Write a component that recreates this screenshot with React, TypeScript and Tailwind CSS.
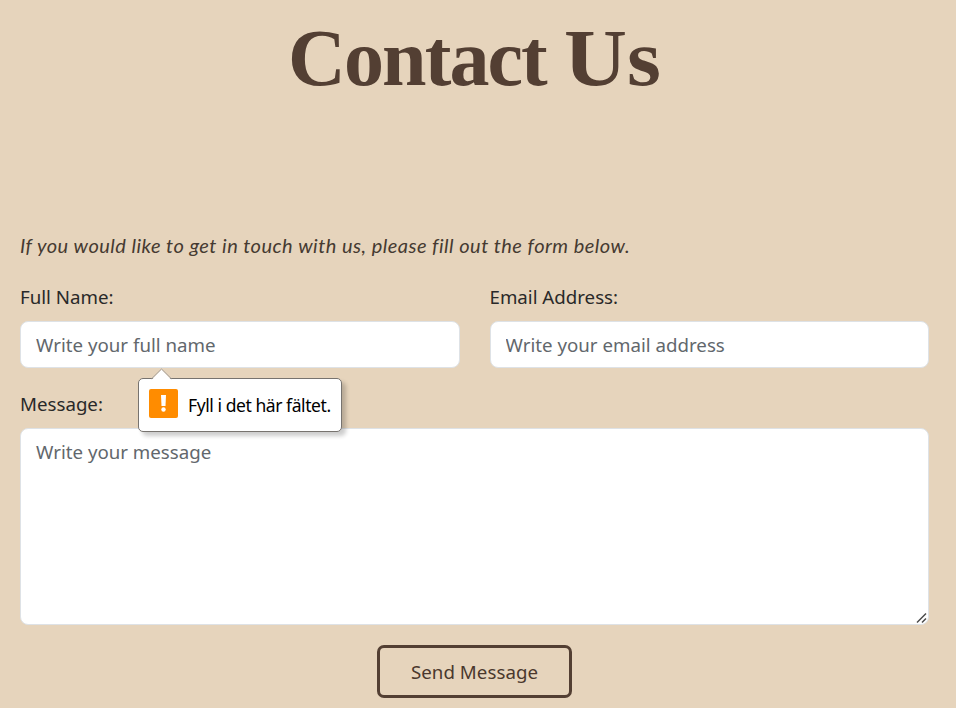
import React from 'react';

const ui = "font-['Noto_Sans','Open_Sans',sans-serif]";
const control =
  'block w-full rounded-[8px] border border-[#dee2e6] bg-white px-[15px] text-[18.7px] leading-[30px] text-[#212529] placeholder:text-[#62676c] placeholder:opacity-100 outline-none';

function Field({ id, label, placeholder }: { id: string; label: string; placeholder: string }) {
  return (
    <div className="flex-1">
      <label htmlFor={id} className="block h-[30px] text-[18.7px] leading-[30px]">{label}</label>
      <input id={id} placeholder={placeholder} className={`${control} mt-[9px] h-[47px] tracking-[0.01px]`} />
    </div>
  );
}

function ValidationTip() {
  return (
    <div className="absolute left-[118px] top-[-4px] z-10 flex h-[54px] w-[204px] items-center rounded-[5px] border border-[#77736f] bg-white pl-[10px] shadow-[4px_4px_4px_rgba(0,0,0,0.2)]">
      <svg className="absolute left-[12px] top-[-11px]" width="22" height="12" viewBox="0 0 22 12">
        <path d="M0.5 12 L10.5 1.5 L20.5 12 Z" fill="white" />
        <path d="M0.5 10.8 L10.5 1 L20.5 10.8" fill="none" stroke="#a5a09a" />
      </svg>
      <svg className="mb-[3px] shrink-0" width="29" height="29" viewBox="0 0 29 29">
        <rect width="29" height="29" rx="2" fill="#ff8c00" />
        <path d="M12 6h5l-.5 11h-4z" fill="white" />
        <circle cx="14.5" cy="20.5" r="2.2" fill="white" />
      </svg>
      <span className="ml-[10px] whitespace-nowrap text-[17.5px] tracking-[-0.43px] text-black">Fyll i det här fältet.</span>
    </div>
  );
}

export default function App() {
  return (
    <main className={`h-[708px] overflow-hidden bg-[#e6d4bc] pl-5 pr-[27px] text-[#292929] ${ui}`}>
      <h1 className="h-[231px] whitespace-nowrap pr-[8px] pt-[10px] text-center font-['Liberation_Serif',serif] text-[80px] font-bold leading-[96px] text-[#533f33]">
        <span className="tracking-[-1.9px]">Contact </span>
        <span className="inline-block origin-left scale-x-[1.09]">Us</span>
      </h1>
      <p className="h-[51px] whitespace-nowrap font-['Lato',sans-serif] text-[20px] italic leading-[28px] tracking-[0.48px] text-[#453a31]">
        If you would like to get in touch with us, please fill out the form below.
      </p>
      <form>
        <div className="flex gap-[30px]">
          <Field id="name" label="Full Name:" placeholder="Write your full name" />
          <Field id="email" label="Email Address:" placeholder="Write your email address" />
        </div>
        <div className="relative mt-[14px] pt-[7px]">
          <label htmlFor="message" className="block h-[30px] text-[18.7px] leading-[30px]">Message:</label>
          <ValidationTip />
          <div className="relative mt-[9px]">
            <textarea id="message" placeholder="Write your message" className={`${control} h-[197px] resize-none pt-[8px]`} />
            <svg className="absolute bottom-[1px] right-[1px]" width="12" height="12" viewBox="0 0 12 12" fill="none" stroke="#4b4b4b" strokeWidth="1.5">
              <path d="M1 10.5 L10 1.5 M6 10.5 L10 6.5" />
            </svg>
          </div>
        </div>
        <div className="mt-[20px] flex justify-center">
          <button type="button" className="h-[53px] w-[195px] rounded-[7px] border-[3px] border-[#533f33] pt-[2px] text-[18.7px] tracking-[0.05px] text-[#4a382d]">
            Send Message
          </button>
        </div>
      </form>
    </main>
  );
}
